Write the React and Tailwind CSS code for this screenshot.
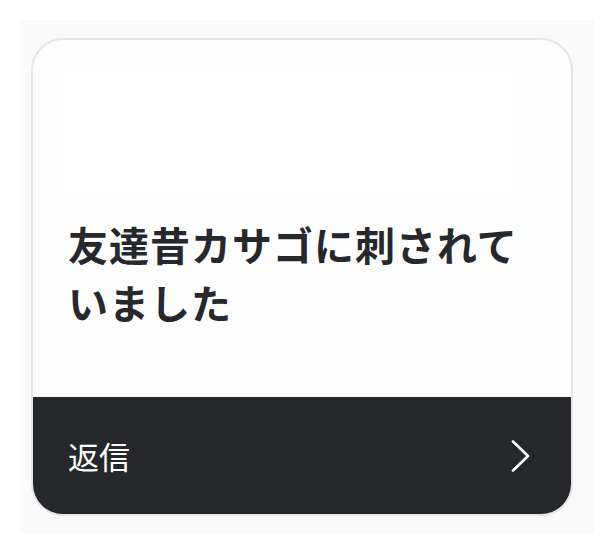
// Notification card with a reply footer
function ChevronRight() {
  return (
    <svg width="20" height="32" viewBox="0 0 20 32" fill="none" className="shrink-0">
      <polyline
        points="2,1.5 17,16 2,30.5"
        stroke="#ffffff"
        strokeWidth="2.6"
        strokeLinecap="round"
        strokeLinejoin="round"
      />
    </svg>
  );
}

export default function App() {
  return (
    <div
      className="w-[614px] h-[551px] bg-white p-5 pb-[18px]"
      style={{ fontFamily: '"Noto Sans CJK JP", "Noto Sans", sans-serif' }}
    >
      <div className="h-full bg-[#fafafa] pl-[11px] pr-[24px] pt-[18px]">
        <div className="w-[542px] h-[478px] rounded-[32px] border-2 border-[#e4e4ea] bg-[#fdfdfd] overflow-hidden flex flex-col">
          <div className="flex-1 flex flex-col relative">
            {/* faint cover placeholder */}
            <div className="absolute left-[30px] top-[27px] w-[455px] h-[127px] bg-[#fefefe]" />
            <div className="flex-1" />
            <h1 className="relative pl-[35px] pr-[30px] pb-[66px] text-[40px] leading-[58px] font-bold text-[#26282c] tracking-[1px]">
              友達昔カサゴに刺されていました
            </h1>
          </div>
          <div className="h-[117px] bg-[#25272b] flex items-center justify-between pl-[35px] pr-[40px]">
            <span className="text-[31px] leading-none text-white">返信</span>
            <ChevronRight />
          </div>
        </div>
      </div>
    </div>
  );
}
